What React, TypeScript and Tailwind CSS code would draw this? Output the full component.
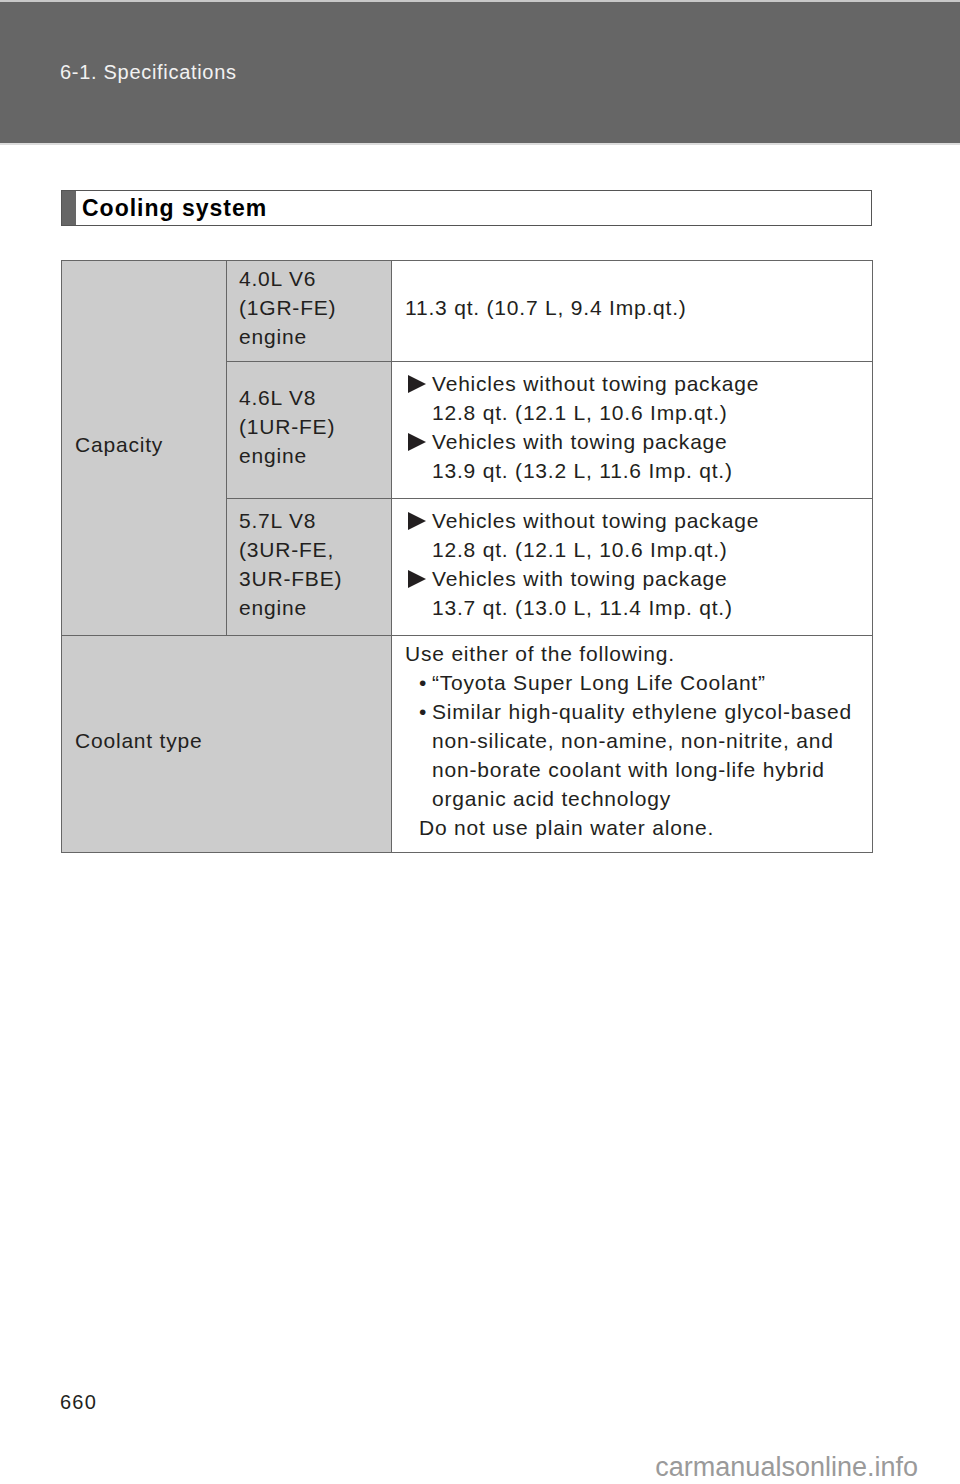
import React from 'react';

const Arrow = () => (
  <svg width="20" height="18" viewBox="0 0 20 18" className="absolute left-[-25px] top-[6px]">
    <polygon points="1,0 19,9 1,18" fill="#231f20" />
  </svg>
);

const Towing = ({ without, withPkg }: { without: string; withPkg: string }) => (
  <div className="pl-[27px]">
    <div className="relative">
      <Arrow />
      Vehicles without towing package
    </div>
    <div>{without}</div>
    <div className="relative">
      <Arrow />
      Vehicles with towing package
    </div>
    <div>{withPkg}</div>
  </div>
);

export default function App() {
  const cell = 'border border-[#666] align-middle pb-[7px]';
  return (
    <div
      className="w-[960px] h-[1484px] bg-white relative text-[#231f20]"
      style={{ fontFamily: '"Liberation Sans", Arial, sans-serif' }}
    >
      {/* page header */}
      <div className="h-[145px] bg-[#666] border-t-2 border-b-2 border-t-[#c8c8c8] border-b-[#dcdcdc] pt-[55px] pl-[60px]">
        <span className="text-[20px] tracking-[0.7px] text-[#f2f2f2]">6-1. Specifications</span>
      </div>

      {/* section title */}
      <div className="mt-[45px] ml-[61px] w-[811px] h-[36px] border border-[#555] flex items-center">
        <div className="w-[14px] h-full bg-[#666]" />
        <span className="ml-[6px] text-[23px] tracking-[1px] font-bold leading-none text-black">Cooling system</span>
      </div>

      {/* table */}
      <table className="mt-[34px] ml-[61px] w-[811px] border-collapse text-[21px] tracking-[0.8px] leading-[29px] table-fixed">
        <colgroup>
          <col className="w-[165px]" />
          <col className="w-[165px]" />
          <col className="w-[481px]" />
        </colgroup>
        <tbody>
          <tr className="h-[101px]">
            <td rowSpan={3} className={`${cell} bg-[#cccccc] pl-[13px]`}>Capacity</td>
            <td className={`${cell} bg-[#cccccc] pl-[12px]`}>
              4.0L V6<br />(1GR-FE)<br />engine
            </td>
            <td className={`${cell} pl-[13px]`}>11.3 qt. (10.7 L, 9.4 Imp.qt.)</td>
          </tr>
          <tr className="h-[137px]">
            <td className={`${cell} bg-[#cccccc] pl-[12px]`}>
              4.6L V8<br />(1UR-FE)<br />engine
            </td>
            <td className={`${cell} pl-[13px]`}>
              <Towing without="12.8 qt. (12.1 L, 10.6 Imp.qt.)" withPkg="13.9 qt. (13.2 L, 11.6 Imp. qt.)" />
            </td>
          </tr>
          <tr className="h-[137px]">
            <td className={`${cell} bg-[#cccccc] pl-[12px]`}>
              5.7L V8<br />(3UR-FE,<br />3UR-FBE)<br />engine
            </td>
            <td className={`${cell} pl-[13px]`}>
              <Towing without="12.8 qt. (12.1 L, 10.6 Imp.qt.)" withPkg="13.7 qt. (13.0 L, 11.4 Imp. qt.)" />
            </td>
          </tr>
          <tr className="h-[217px]">
            <td colSpan={2} className={`${cell} bg-[#cccccc] pl-[13px]`}>Coolant type</td>
            <td className={`${cell} pl-[13px] whitespace-nowrap`}>
              <div>Use either of the following.</div>
              <div className="flex pl-[14px]">
                <span className="w-[13px] shrink-0">•</span>
                <span>“Toyota Super Long Life Coolant”</span>
              </div>
              <div className="flex pl-[14px]">
                <span className="w-[13px] shrink-0">•</span>
                <span>
                  Similar high-quality ethylene glycol-based
                  <br />
                  non-silicate, non-amine, non-nitrite, and
                  <br />
                  non-borate coolant with long-life hybrid
                  <br />
                  organic acid technology
                </span>
              </div>
              <div className="pl-[14px]">Do not use plain water alone.</div>
            </td>
          </tr>
        </tbody>
      </table>

      {/* footer */}
      <div className="absolute left-[60px] top-[1389px] text-[20px] tracking-[1.2px] leading-[26px]">660</div>
      <div
        className="absolute right-[42px] top-[1447px] text-[27px] text-[#9a9a9a]"
        style={{ fontFamily: '"Liberation Sans Narrow", "Liberation Sans", sans-serif' }}
      >
        carmanualsonline.info
      </div>
    </div>
  );
}
